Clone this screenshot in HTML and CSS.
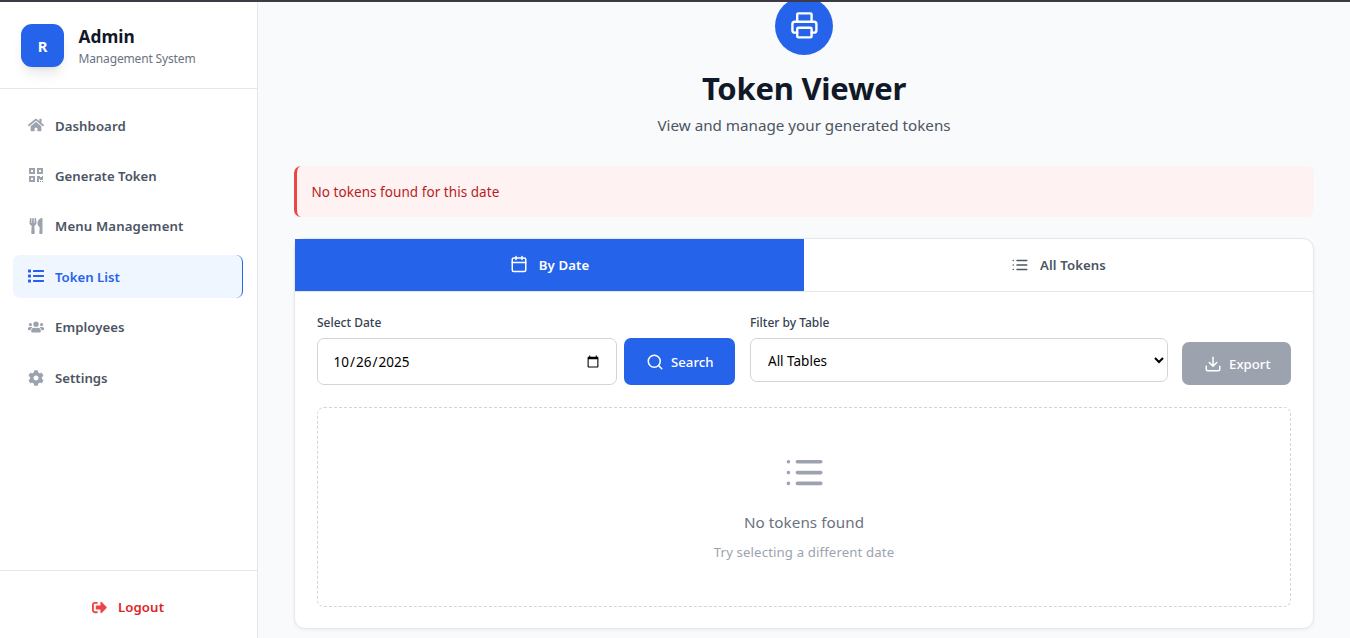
FILE: index.html
```html
<!DOCTYPE html>
<html lang="en">
<head>
<meta charset="utf-8">
<title>Token Viewer</title>
<link rel="stylesheet" href="styles.css">
</head>
<body>
<div class="topline"></div>
<div class="app">
  <aside class="sidebar">
    <div class="brand">
      <div class="brand-logo">R</div>
      <div class="brand-text">
        <div class="brand-name">Admin</div>
        <div class="brand-sub">Management System</div>
      </div>
    </div>
    <nav class="nav">
      <a class="nav-item"><svg class="fa" viewBox="0 0 576 512"><path d="M280.37 148.26L96 300.11V464a16 16 0 0 0 16 16l112.06-.29a16 16 0 0 0 15.92-16V368a16 16 0 0 1 16-16h64a16 16 0 0 1 16 16v95.64a16 16 0 0 0 16 16.05L464 480a16 16 0 0 0 16-16V300L295.67 148.26a12.19 12.19 0 0 0-15.3 0zM571.6 251.47L488 182.56V44.05a12 12 0 0 0-12-12h-56a12 12 0 0 0-12 12v72.61L318.47 43a48 48 0 0 0-61 0L4.34 251.47a12 12 0 0 0-1.6 16.9l25.5 31A12 12 0 0 0 45.15 301l235.22-193.74a12.19 12.19 0 0 1 15.3 0L530.9 301a12 12 0 0 0 16.9-1.6l25.5-31a12 12 0 0 0-1.7-16.93z"/></svg><span class="t-dashboard">Dashboard</span></a>
      <a class="nav-item"><svg class="fa" viewBox="0 0 448 512"><path d="M0 224h192V32H0v192zM64 96h64v64H64V96zm192-64v192h192V32H256zm128 128h-64V96h64v64zM0 480h192V288H0v192zm64-128h64v64H64v-64zm352-64h32v128h-96v-32h-32v96h-64V288h96v32h64v-32zm0 160h32v32h-32v-32zm-64 0h32v32h-32v-32z"/></svg><span class="t-generate">Generate Token</span></a>
      <a class="nav-item"><svg class="fa" viewBox="0 0 416 512"><path d="M207.9 15.2c.8 4.7 16.1 94.5 16.1 128.8 0 52.3-27.8 89.6-68.9 104.6L168 486.7c.7 13.7-10.2 25.3-24 25.3H80c-13.7 0-24.7-11.5-24-25.3l12.9-238.1C27.7 233.6 0 196.2 0 144 0 109.6 15.3 19.9 16.1 15.2 19.3-5.1 61.4-5.4 64 16.3v141.2c1.3 3.4 15.1 3.2 16 0 1.4-25.3 7.9-139.2 8-141.8 3.3-20.8 44.7-20.8 47.9 0 .2 2.7 6.6 116.5 8 141.8.9 3.2 14.8 3.4 16 0V16.3c2.6-21.6 44.8-21.4 48-1.1zm119.2 285.7l-15 185.1c-1.2 14 9.9 26 23.9 26h56c13.3 0 24-10.7 24-24V24c0-13.2-10.7-24-24-24-82.5 0-221.4 178.5-64.9 300.9z"/></svg><span class="t-menu">Menu Management</span></a>
      <a class="nav-item active"><svg class="fa" viewBox="0 0 512 512"><path d="M80 368H16a16 16 0 0 0-16 16v64a16 16 0 0 0 16 16h64a16 16 0 0 0 16-16v-64a16 16 0 0 0-16-16zm0-320H16A16 16 0 0 0 0 64v64a16 16 0 0 0 16 16h64a16 16 0 0 0 16-16V64a16 16 0 0 0-16-16zm0 160H16a16 16 0 0 0-16 16v64a16 16 0 0 0 16 16h64a16 16 0 0 0 16-16v-64a16 16 0 0 0-16-16zm416 176H176a16 16 0 0 0-16 16v32a16 16 0 0 0 16 16h320a16 16 0 0 0 16-16v-32a16 16 0 0 0-16-16zm0-320H176a16 16 0 0 0-16 16v32a16 16 0 0 0 16 16h320a16 16 0 0 0 16-16V80a16 16 0 0 0-16-16zm0 160H176a16 16 0 0 0-16 16v32a16 16 0 0 0 16 16h320a16 16 0 0 0 16-16v-32a16 16 0 0 0-16-16z"/></svg><span class="t-list">Token List</span></a>
      <a class="nav-item"><svg class="fa" viewBox="0 0 640 512"><path d="M96 224c35.3 0 64-28.7 64-64s-28.7-64-64-64-64 28.7-64 64 28.7 64 64 64zm448 0c35.3 0 64-28.7 64-64s-28.7-64-64-64-64 28.7-64 64 28.7 64 64 64zm32 32h-64c-17.6 0-33.5 7.1-45.1 18.6 40.3 22.1 68.9 62 75.1 109.4h66c17.7 0 32-14.3 32-32v-32c0-35.3-28.7-64-64-64zm-256 0c61.9 0 112-50.1 112-112S381.9 32 320 32 208 82.1 208 144s50.1 112 112 112zm76.8 32h-8.3c-20.8 10-43.9 16-68.5 16s-47.6-6-68.5-16h-8.3C179.6 288 128 339.6 128 403.2V432c0 26.5 21.5 48 48 48h288c26.5 0 48-21.5 48-48v-28.8c0-63.6-51.6-115.2-115.2-115.2zm-223.7-13.4C161.5 263.1 145.6 256 128 256H64c-35.3 0-64 28.7-64 64v32c0 17.7 14.3 32 32 32h65.9c6.3-47.4 34.9-87.3 75.2-109.4z"/></svg><span class="t-employees">Employees</span></a>
      <a class="nav-item nav-last"><svg class="fa" viewBox="0 0 512 512"><path d="M487.4 315.7l-42.6-24.6c4.3-23.2 4.3-47 0-70.2l42.6-24.6c4.9-2.8 7.1-8.6 5.5-14-11.1-35.6-30-67.8-54.7-94.6-3.8-4.1-10-5.1-14.8-2.3L380.8 110c-17.9-15.4-38.5-27.3-60.8-35.1V25.8c0-5.6-3.9-10.5-9.4-11.7-36.7-8.2-74.3-7.8-109.2 0-5.5 1.2-9.4 6.1-9.4 11.7V75c-22.2 7.9-42.8 19.8-60.8 35.1L88.7 85.5c-4.9-2.8-11-1.9-14.8 2.3-24.7 26.7-43.6 58.9-54.7 94.6-1.7 5.4.6 11.2 5.5 14L67.3 221c-4.3 23.2-4.3 47 0 70.2l-42.6 24.6c-4.9 2.8-7.1 8.6-5.5 14 11.1 35.6 30 67.8 54.7 94.6 3.8 4.1 10 5.1 14.8 2.3l42.6-24.6c17.9 15.4 38.5 27.3 60.8 35.1v49.2c0 5.6 3.9 10.5 9.4 11.7 36.7 8.2 74.3 7.8 109.2 0 5.5-1.2 9.4-6.1 9.4-11.7v-49.2c22.2-7.9 42.8-19.8 60.8-35.1l42.6 24.6c4.9 2.8 11 1.9 14.8-2.3 24.7-26.7 43.6-58.9 54.7-94.6 1.5-5.5-.7-11.3-5.6-14.1zM256 336c-44.1 0-80-35.9-80-80s35.9-80 80-80 80 35.9 80 80-35.9 80-80 80z"/></svg><span class="t-settings">Settings</span></a>
    </nav>
    <div class="logout">
      <svg class="logout-icon" viewBox="0 0 512 512"><path d="M497 273L329 441c-15 15-41 4.5-41-17v-96H152c-13.3 0-24-10.7-24-24v-96c0-13.3 10.7-24 24-24h136V88c0-21.4 25.9-32 41-17l168 168c9.3 9.4 9.3 24.6 0 34zM192 436v-40c0-6.6-5.4-12-12-12H96c-17.7 0-32-14.3-32-32V160c0-17.7 14.3-32 32-32h84c6.6 0 12-5.4 12-12V76c0-6.6-5.4-12-12-12H96c-53 0-96 43-96 96v192c0 53 43 96 96 96h84c6.6 0 12-5.4 12-12z"/></svg>
      <span>Logout</span>
    </div>
  </aside>
  <main class="main">
    <header class="hero">
      <div class="hero-icon"><svg class="line" width="28.8" height="28.8" viewBox="0 0 24 24"><path d="M6 9V3a1 1 0 0 1 1-1h10a1 1 0 0 1 1 1v6M6 18H4a2 2 0 0 1-2-2v-5a2 2 0 0 1 2-2h16a2 2 0 0 1 2 2v5a2 2 0 0 1-2 2h-2"/><rect x="6" y="14" width="12" height="8" rx="1"/></svg></div>
      <h1 class="title">Token Viewer</h1>
      <p class="subtitle">View and manage your generated tokens</p>
    </header>
    <div class="alert"><span>No tokens found for this date</span></div>
    <section class="card">
      <div class="tabs">
        <div class="tab tab-on"><svg class="line" width="18" height="18" viewBox="0 0 24 24"><rect x="3" y="4" width="18" height="18" rx="2"/><path d="M16 2v4M8 2v4M3 10h18"/></svg><span class="t-bydate">By Date</span></div>
        <div class="tab"><svg class="line" width="18" height="18" viewBox="0 0 24 24"><path d="M8 6h13M8 12h13M8 18h13M3 6h.01M3 12h.01M3 18h.01"/></svg><span class="t-all">All Tokens</span></div>
      </div>
      <div class="panel">
        <div class="filters">
          <div class="field field-date">
            <label class="label">Select Date</label>
            <div class="date-row">
              <input class="date" type="date" value="2025-10-26">
              <button class="btn btn-search"><svg class="line" width="18" height="18" viewBox="0 0 24 24"><circle cx="11" cy="11" r="8"/><path d="M21 21l-4.35-4.35"/></svg><span>Search</span></button>
            </div>
          </div>
          <div class="field field-table">
            <label class="label label-table">Filter by Table</label>
            <select class="select"><option>All Tables</option></select>
          </div>
          <button class="btn btn-export"><svg class="line" width="18" height="18" viewBox="0 0 24 24"><path d="M21 15v4a2 2 0 0 1-2 2H5a2 2 0 0 1-2-2v-4M7 10l5 5 5-5M12 15V3"/></svg><span>Export</span></button>
        </div>
        <div class="empty">
          <svg class="line empty-icon" width="43.2" height="43.2" viewBox="0 0 24 24"><path d="M8 6h13M8 12h13M8 18h13M3 6h.01M3 12h.01M3 18h.01"/></svg>
          <p class="empty-title">No tokens found</p>
          <p class="empty-sub">Try selecting a different date</p>
        </div>
      </div>
    </section>
  </main>
</div>
</body>
</html>
```
FILE: styles.css
```css
* { box-sizing: border-box; margin: 0; padding: 0; }
html, body { height: 638px; overflow: hidden; }
body { font-family: "Noto Sans", "Open Sans", sans-serif; background: #f9fafb; color: #111827; }
.topline { position: absolute; top: 0; left: 0; width: 100%; height: 2px; background: #3b3a45; z-index: 5; }
.app { display: flex; height: 638px; }
.line { fill: none; stroke: currentColor; stroke-width: 2; stroke-linecap: round; stroke-linejoin: round; flex: none; }
span, label, p, h1, .brand-name, .brand-sub { white-space: nowrap; }

.sidebar { width: 258px; flex: none; background: #fff; border-right: 1px solid #e5e7eb; display: flex; flex-direction: column; }
.brand { height: 89px; border-bottom: 1px solid #e5e7eb; padding: 24px 0 0 21px; display: flex; gap: 14.5px; }
.brand-logo { width: 43px; height: 43px; border-radius: 11px; background: #2563eb; color: #fff; font-weight: 700; font-size: 14.8px; padding-top: 1px; display: flex; align-items: center; justify-content: center; box-shadow: 0 9px 13px -3px rgba(0,0,0,.1), 0 4px 5px -4px rgba(0,0,0,.1); }
.brand-name { font-weight: 700; font-size: 17.3px; line-height: 25px; }
.brand-sub { font-size: 12px; line-height: 20px; color: #6b7280; letter-spacing: -.15px; }
.nav { flex: 1; padding: 15px 14px 0 13px; display: flex; flex-direction: column; gap: 7.4px; }
.nav-item { height: 43px; border-radius: 7px; padding-left: 15px; display: flex; align-items: center; gap: 11px; font-size: 13.2px; font-weight: 600; color: #4b5563; }
.nav-last { padding-top: 1.2px; }
.fa { width: 16px; height: 16px; margin-bottom: 1px; fill: #9ca3af; flex: none; }
.t-dashboard, .t-employees { letter-spacing: .07px; }
.t-menu { letter-spacing: .14px; }
.active { background: #eff6ff; color: #2563eb; border-right: 1px solid #2563eb; }
.active .fa { fill: #2563eb; }
.logout { height: 68px; border-top: 1px solid #e5e7eb; display: flex; align-items: center; justify-content: center; gap: 11px; padding: 5px 1px 0 0; color: #dc2626; font-size: 13.2px; font-weight: 600; letter-spacing: .12px; }
.logout-icon { width: 15px; height: 15px; fill: #ef4444; }

.main { flex: 1; padding: 0 36px; overflow: hidden; }
.hero { height: 166px; display: flex; flex-direction: column; align-items: center; }
.hero-icon { width: 58px; height: 58px; flex: none; margin-top: -3px; padding-bottom: 1.4px; border-radius: 50%; background: #2563eb; color: #fff; display: flex; align-items: center; justify-content: center; }
.title { font-size: 31px; line-height: 40px; margin-top: 13px; font-weight: 700; letter-spacing: -.25px; }
.subtitle { font-size: 15.2px; line-height: 24px; margin-top: 5px; color: #4b5563; }
.alert { height: 51px; border-left: 3px solid #ef4444; border-radius: 7px; background: #fef2f2; color: #b91c1c; font-size: 13.5px; letter-spacing: .05px; display: flex; align-items: center; padding-left: 14.5px; }
.card { height: 391px; margin-top: 21px; border: 1px solid #e5e7eb; border-radius: 11px; background: #fff; box-shadow: 0 1px 3px rgba(0,0,0,.06); }
.tabs { display: flex; height: 53px; border-bottom: 1px solid #e5e7eb; }
.tab { flex: 1; display: flex; align-items: center; justify-content: center; gap: 11px; font-size: 13.2px; font-weight: 600; letter-spacing: .1px; color: #4b5563; }
.tab-on { background: #2563eb; color: #fff; }
.tab-on .line { margin-bottom: 1.5px; }
.panel { padding: 22px; }
.filters { display: flex; }
.label { display: block; font-size: 12px; line-height: 18px; font-weight: 500; color: #374151; margin-bottom: 6px; }
.date-row { display: flex; gap: 7px; }
.date { width: 300px; height: 47px; border: 1px solid #d1d5db; border-radius: 7px; padding: 0 14.4px; font-family: inherit; font-size: 13.5px; letter-spacing: .03px; color: #000; background: #fff; }
.btn { border: 0; border-radius: 7px; color: #fff; font-family: inherit; font-size: 13.2px; font-weight: 500; display: flex; align-items: center; justify-content: center; gap: 7.5px; }
.btn-search { width: 111px; height: 47px; background: #2563eb; }
.field-table { margin-left: 15px; }
.select { display: block; width: 418px; height: 44px; border: 1px solid #d1d5db; border-radius: 7px; padding: 2px 0 0 13px; font-family: inherit; font-size: 13.5px; color: #000; background: #fff; }
.btn-export { width: 109px; height: 43px; margin: 28px 0 0 14px; padding-left: 1px; background: #9ca3af; }
.empty { height: 200px; margin-top: 22px; border: 1px dashed #d1d5db; border-radius: 7px; display: flex; flex-direction: column; align-items: center; padding-top: 43px; }
.empty-icon { color: #9ca3af; margin-left: 2px; }
.empty-title { margin-top: 16px; font-size: 15.2px; line-height: 24px; letter-spacing: .06px; color: #6b7280; }
.empty-sub { margin-top: 8px; font-size: 13.2px; line-height: 20px; letter-spacing: .13px; color: #9ca3af; }
```
